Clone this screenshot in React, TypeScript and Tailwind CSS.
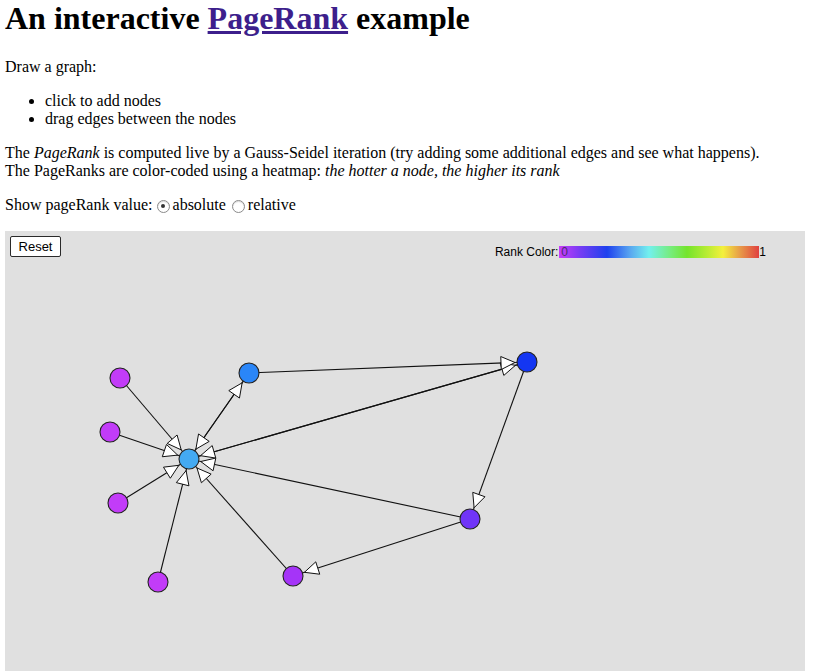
type Node = { id: string; x: number; y: number; color: string };
type Edge = { from: string; to: string; arrow?: boolean };

// node centres in canvas coordinates
const nodes: Node[] = [
  { id: "a", x: 115, y: 147, color: "#c23cf8" },
  { id: "b", x: 105, y: 201, color: "#c23cf8" },
  { id: "c", x: 113, y: 272, color: "#c23cf8" },
  { id: "d", x: 153, y: 351, color: "#c23cf8" },
  { id: "e", x: 184, y: 228, color: "#44aaf2" },
  { id: "f", x: 244, y: 142, color: "#2a86f8" },
  { id: "g", x: 522, y: 131, color: "#1436f2" },
  { id: "h", x: 465, y: 288, color: "#7034f8" },
  { id: "i", x: 288, y: 345, color: "#a534f8" },
];

const edges: Edge[] = [
  { from: "a", to: "e", arrow: true },
  { from: "b", to: "e", arrow: true },
  { from: "c", to: "e", arrow: true },
  { from: "d", to: "e", arrow: true },
  { from: "e", to: "f", arrow: true },
  { from: "f", to: "e", arrow: true },
  { from: "e", to: "g", arrow: true },
  { from: "g", to: "e", arrow: true },
  { from: "f", to: "g", arrow: true },
  { from: "g", to: "h", arrow: true },
  { from: "h", to: "e", arrow: true },
  { from: "h", to: "i", arrow: true },
  { from: "i", to: "e", arrow: true },
];

const byId = (id: string) => nodes.find((n) => n.id === id)!;

const arrowPoints = (e: Edge) => {
  const s = byId(e.from);
  const t = byId(e.to);
  const dx = t.x - s.x;
  const dy = t.y - s.y;
  const len = Math.hypot(dx, dy);
  const ux = dx / len;
  const uy = dy / len;
  const tipX = t.x - ux * 12;
  const tipY = t.y - uy * 12;
  const baseX = tipX - ux * 14;
  const baseY = tipY - uy * 14;
  const px = -uy * 6.5;
  const py = ux * 6.5;
  return `${tipX},${tipY} ${baseX + px},${baseY + py} ${baseX - px},${baseY - py}`;
};

const Graph = () => (
  <svg className="absolute inset-0" width="800" height="450">
    {edges.map((e, i) => {
      const s = byId(e.from);
      const t = byId(e.to);
      return <line key={i} x1={s.x} y1={s.y} x2={t.x} y2={t.y} stroke="#111" strokeWidth="1.1" />;
    })}
    {edges
      .filter((e) => e.arrow)
      .map((e, i) => (
        <polygon key={i} points={arrowPoints(e)} fill="#fff" stroke="#111" strokeWidth="1" />
      ))}
    {nodes.map((n) => (
      <circle key={n.id} cx={n.x} cy={n.y} r="10" fill={n.color} stroke="#222" strokeWidth="1.1" />
    ))}
  </svg>
);

const Radio = ({ checked }: { checked?: boolean }) => (
  <span className="mx-[3px] inline-flex h-[13px] w-[13px] translate-y-[1px] items-center justify-center rounded-full border border-[#8a8a8a] bg-white shadow-[inset_0_1px_1px_rgba(0,0,0,0.15)]">
    {checked && <span className="h-[4px] w-[4px] rounded-full bg-[#333]" />}
  </span>
);

export default function App() {
  return (
    <div className="min-h-[671px] bg-white px-[5px] font-['Liberation_Serif',serif] text-[16px] leading-[18px] text-black">
      <h1 className="mb-[21px] text-[32px] font-bold leading-[37px]">
        An interactive{" "}
        <a href="#" className="text-[#3d1f8c] underline">
          PageRank
        </a>{" "}
        example
      </h1>
      <p className="mb-4">Draw a graph:</p>
      <ul className="mb-4 list-disc pl-10">
        <li>click to add nodes</li>
        <li>drag edges between the nodes</li>
      </ul>
      <p className="mb-4">
        The <i>PageRank</i> is computed live by a Gauss-Seidel iteration (try adding some additional
        edges and see what happens).
        <br />
        The PageRanks are color-coded using a heatmap: <i>the hotter a node, the higher its rank</i>
      </p>
      <p className="mb-[17px] flex items-center">
        Show pageRank value:
        <span className="ml-[1px]" />
        <Radio checked />
        absolute
        <span className="ml-[3px]" />
        <Radio />
        relative
      </p>
      <div className="relative h-[450px] w-[800px] bg-[#e0e0e0]">
        <Graph />
        <div className="relative flex items-start justify-between px-[5px] pt-[5px] font-['Liberation_Sans',sans-serif]">
          <button className="h-[21px] w-[51px] rounded-[2px] border border-[#2a2a2a] bg-white text-[13px] leading-none text-black">
            Reset
          </button>
          <div className="mr-[34px] mt-[10px] flex items-center text-[12px] leading-[12px]">
            <span className="pr-[1px]">Rank Color:</span>
            <div className="flex h-[12px] w-[200px] items-center bg-[linear-gradient(to_right,#c83cf8,#7a3cf4_10%,#1e40ee_24%,#5aaaf0_36%,#72f0ee_45%,#76ec7a_56%,#74e42c_64%,#b8ec34_74%,#f4f03c_82%,#e8a048_90%,#e04040_100%)] pl-[2px] text-[#4a2a70]">
              0
            </div>
            <span>1</span>
          </div>
        </div>
      </div>
    </div>
  );
}
